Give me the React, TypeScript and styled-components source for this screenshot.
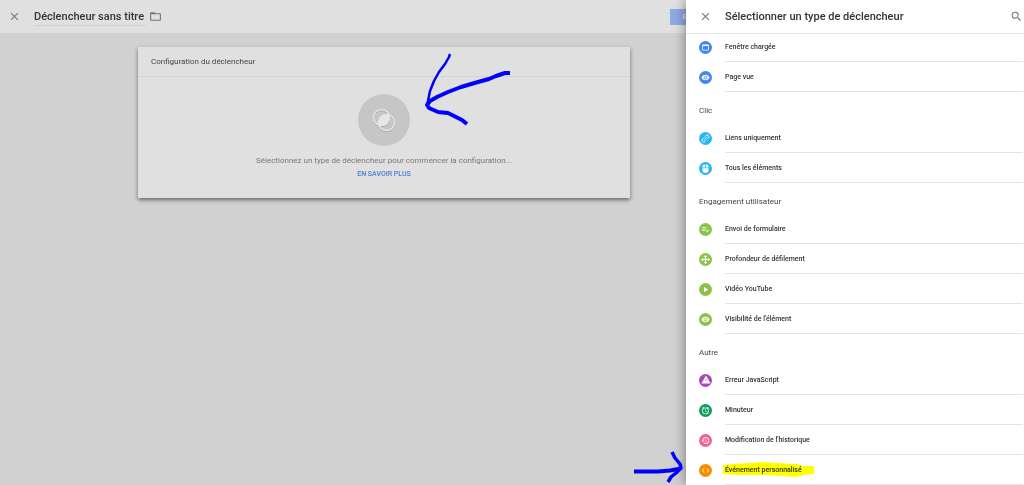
import React from 'react';
import styled, { createGlobalStyle } from 'styled-components';
import type { IconType } from 'react-icons';
import {
  MdAlarm,
  MdClose,
  MdCode,
  MdFolderOpen,
  MdHistory,
  MdPlayArrow,
  MdPlaylistAddCheck,
  MdSearch,
  MdVisibility,
  MdWebAsset,
} from 'react-icons/md';

const GlobalStyle = createGlobalStyle`
  * { box-sizing: border-box; }
  body {
    margin: 0;
    background: #d1d1d1;
    font-family: Roboto, "Liberation Sans", sans-serif;
    color: #3c3c3c;
  }
  button { font: inherit; color: inherit; border: 0; padding: 0; background: none; cursor: pointer; }
  h1, h2, h3, p, ul { margin: 0; padding: 0; font-weight: 400; }
`;

const Page = styled.div`
  display: flex;
  height: 100vh;
  overflow: hidden;
`;

const Workspace = styled.div`
  flex: 1;
  min-width: 0;
  overflow: hidden;
`;

const TopBar = styled.header`
  display: flex;
  align-items: center;
  height: 33px;
  padding-left: 8px;
  background: #e0e0e0;
`;

const IconButton = styled.button`
  display: grid;
  place-items: center;
  flex: none;
  width: 13px;
  height: 13px;
  color: #757575;
`;

const TitleField = styled.input`
  width: 112px;
  height: 18px;
  margin: 0 3px 0 13px;
  padding: 0;
  border: 0;
  border-bottom: 1px solid #d2d2d2;
  background: none;
  font: 500 11px/16px Roboto, "Liberation Sans", sans-serif;
  color: #333;
`;

const SaveButton = styled.button`
  flex: none;
  width: 64px;
  height: 16px;
  margin: 0 -48px 0 auto;
  background: #8eabe2;
  color: #dfe5f0;
  font-size: 8px;
  font-weight: 500;
  line-height: 16px;
`;

const Main = styled.main`
  padding: 14px 56px 0 138px;
`;

const Card = styled.section`
  position: relative;
  background: #e0e0e0;
  box-shadow: 0 2px 4px rgba(0, 0, 0, 0.5);
`;

const CardTitle = styled.h2`
  padding: 0 13px;
  border-bottom: 1px solid #d3d3d3;
  font-size: 8px;
  line-height: 29px;
  color: #444;
`;

const CardBody = styled.div`
  display: flex;
  flex-direction: column;
  align-items: center;
  padding: 17px 0 18px;
`;

const Emblem = styled.button`
  display: grid;
  place-items: center;
  width: 52px;
  height: 52px;
  border-radius: 50%;
  background: #c6c6c6;
`;

const Hint = styled.p`
  margin-top: 8px;
  font-size: 8px;
  line-height: 14px;
  color: #777;
`;

const LearnMore = styled.a`
  font-size: 7px;
  font-weight: 500;
  line-height: 12px;
  color: #4a78d8;
  text-decoration: none;
`;

const CardArrow = styled.svg`
  position: absolute;
  top: 0;
  left: 50%;
  width: 140px;
  height: 90px;
  pointer-events: none;
`;

const Panel = styled.aside`
  position: relative;
  display: flex;
  flex-direction: column;
  flex: none;
  width: 338px;
  background: #fff;
  box-shadow: 0 0 12px rgba(0, 0, 0, 0.45);
`;

const PanelHeader = styled.header`
  position: relative;
  z-index: 1;
  display: flex;
  align-items: center;
  flex: none;
  height: 34px;
  padding: 0 1px 0 13px;
  border-bottom: 1px solid #e4e4e4;
  background: #fff;
`;

const PanelTitle = styled.h1`
  flex: 1;
  margin-left: 13px;
  font-size: 11px;
  font-weight: 500;
  line-height: 16px;
  color: #333;
`;

const PanelBody = styled.div`
  margin-top: -2px;
`;

const GroupTitle = styled.h3`
  height: 31px;
  padding: 5px 0 0 13px;
  font-size: 8px;
  line-height: 28px;
  color: #444;
`;

const Row = styled.button`
  display: flex;
  align-items: center;
  gap: 13px;
  width: 100%;
  height: 30px;
  padding: 0 1px 0 13px;
  text-align: left;
`;

const Badge = styled.span<{ $color: string }>`
  display: grid;
  place-items: center;
  flex: none;
  width: 13px;
  height: 13px;
  border-radius: 50%;
  background: ${(p) => p.$color};
  color: #fff;
`;

const RowLabel = styled.span`
  flex: 1;
  height: 30px;
  border-bottom: 1px solid #e4e4e4;
  font-size: 7px;
  font-weight: 500;
  line-height: 31px;
  color: #333;
`;

const Marked = styled.span`
  position: relative;
  display: inline-block;
`;

const MarkerStroke = styled.svg`
  position: absolute;
  top: 7px;
  left: -2px;
  width: 92px;
  height: 16px;
  mix-blend-mode: multiply;
`;

const PanelArrow = styled.svg`
  position: absolute;
  top: 450px;
  left: -54px;
  width: 52px;
  height: 35px;
  pointer-events: none;
`;

const MouseGlyph = () => (
  <svg width="9" height="9" viewBox="0 0 24 24" fill="currentColor">
    <path d="M11 1H9a5 5 0 0 0-5 5v3h7zM13 1v8h7V6a5 5 0 0 0-5-5zM4 11v7a5 5 0 0 0 5 5h6a5 5 0 0 0 5-5v-7z" />
  </svg>
);

const ScrollGlyph = () => (
  <svg width="9" height="9" viewBox="0 0 24 24" fill="currentColor">
    <path d="M12 0l5 5h-3.500v5.500H19V7l5 5-5 5v-3.500h-5.500V19H17l-5 5-5-5h3.500v-5.500H5V17l-5-5 5-5v3.500h5.500V5H7z" />
  </svg>
);

const LinkGlyph = () => (
  <svg width="9" height="9" viewBox="0 0 24 24" fill="none" stroke="currentColor" strokeWidth="2.200">
    <g transform="rotate(-45 12 12)">
      <path d="M10 7.500H5.500a4.500 4.500 0 0 0 0 9H10M14 7.500h4.500a4.500 4.500 0 0 1 0 9H14M7 12h10" />
    </g>
  </svg>
);

const ErrorGlyph = () => (
  <svg width="10" height="10" viewBox="0 0 24 24" fill="currentColor" fillRule="evenodd">
    <path d="M12 1L1 20.500h22zM11.200 9h1.600v6h-1.600z" />
  </svg>
);

const glyph = (Icon: IconType, size = 9) => <Icon size={size} />;

type Item = { label: string; color: string; icon: React.ReactNode; marked?: boolean };
type Group = { title?: string; items: Item[] };

const groups: Group[] = [
  {
    items: [
      { label: 'Fenêtre chargée', color: '#4285f4', icon: glyph(MdWebAsset) },
      { label: 'Page vue', color: '#4285f4', icon: glyph(MdVisibility) },
    ],
  },
  {
    title: 'Clic',
    items: [
      { label: 'Liens uniquement', color: '#29b6f6', icon: <LinkGlyph /> },
      { label: 'Tous les éléments', color: '#29b6f6', icon: <MouseGlyph /> },
    ],
  },
  {
    title: 'Engagement utilisateur',
    items: [
      { label: 'Envoi de formulaire', color: '#8bc34a', icon: glyph(MdPlaylistAddCheck) },
      { label: 'Profondeur de défilement', color: '#8bc34a', icon: <ScrollGlyph /> },
      { label: 'Vidéo YouTube', color: '#8bc34a', icon: glyph(MdPlayArrow) },
      { label: "Visibilité de l'élément", color: '#8bc34a', icon: glyph(MdVisibility) },
    ],
  },
  {
    title: 'Autre',
    items: [
      { label: 'Erreur JavaScript', color: '#ab47bc', icon: <ErrorGlyph /> },
      { label: 'Minuteur', color: '#0f9d58', icon: glyph(MdAlarm) },
      { label: "Modification de l'historique", color: '#f06292', icon: glyph(MdHistory) },
      { label: 'Événement personnalisé', color: '#fb8c00', icon: glyph(MdCode), marked: true },
    ],
  },
];

export default function App() {
  return (
    <>
      <GlobalStyle />
      <Page>
        <Workspace>
          <TopBar>
            <IconButton aria-label="Fermer">
              <MdClose size={13} />
            </IconButton>
            <TitleField aria-label="Nom du déclencheur" defaultValue="Déclencheur sans titre" />
            <IconButton aria-label="Dossier">
              <MdFolderOpen size={13} />
            </IconButton>
            <SaveButton>Enregistrer</SaveButton>
          </TopBar>
          <Main>
            <Card>
              <CardTitle>Configuration du déclencheur</CardTitle>
              <CardBody>
                <Emblem aria-label="Choisir un type de déclencheur">
                  <svg width="26" height="26" viewBox="0 0 26 26" fill="none">
                    <g stroke="#aaa" strokeWidth="1.500" transform="translate(0 1)">
                      <circle cx="10.500" cy="10.500" r="8" />
                      <circle cx="15.500" cy="15.500" r="8" />
                    </g>
                    <path d="M18 8a8 8 0 0 1-10 10A8 8 0 0 1 18 8z" fill="#e6e6e6" />
                    <g stroke="#e6e6e6" strokeWidth="1.500">
                      <circle cx="10.500" cy="10.500" r="8" />
                      <circle cx="15.500" cy="15.500" r="8" />
                    </g>
                  </svg>
                </Emblem>
                <Hint>Sélectionnez un type de déclencheur pour commencer la configuration...</Hint>
                <LearnMore href="#">EN SAVOIR PLUS</LearnMore>
              </CardBody>
              <CardArrow
                viewBox="384 47 140 90"
                fill="none"
                stroke="#0000fe"
                strokeWidth="4"
                strokeLinejoin="round"
              >
                <path strokeWidth="2.500" d="M450 54l-1 3-4 7-6 8-5 9-4 10-2 10-1 4" />
                <path d="M510 73h-5l-9 3-7 3-11 3-17 5-13 5-11 5-7 4-3 4 2 3 9 4 10 1 6 3 8 4 5 4" />
              </CardArrow>
            </Card>
          </Main>
        </Workspace>
        <Panel>
          <PanelHeader>
            <IconButton aria-label="Fermer">
              <MdClose size={13} />
            </IconButton>
            <PanelTitle>Sélectionner un type de déclencheur</PanelTitle>
            <IconButton aria-label="Rechercher">
              <MdSearch size={13} />
            </IconButton>
          </PanelHeader>
          <PanelBody>
            {groups.map((group, i) => (
              <section key={i}>
                {group.title && <GroupTitle>{group.title}</GroupTitle>}
                {group.items.map((item) => (
                  <Row key={item.label}>
                    <Badge $color={item.color}>{item.icon}</Badge>
                    <RowLabel>
                      {item.marked ? (
                        <Marked>
                          {item.label}
                          <MarkerStroke viewBox="723 460 92 16">
                            <path
                              fill="#ff0"
                              d="M723 463l10-1 16-1 12-1 17 1 17 1 8 2h11v8l-9 1-9 2-14-1-16-1-28 0-15-1z"
                            />
                          </MarkerStroke>
                        </Marked>
                      ) : (
                        item.label
                      )}
                    </RowLabel>
                  </Row>
                ))}
              </section>
            ))}
          </PanelBody>
          <PanelArrow viewBox="632 450 52 35" fill="none" stroke="#0000fe" strokeWidth="4">
            <path d="M634 471.500h24l12-1 11-2" />
            <path strokeWidth="3.500" strokeLinejoin="round" d="M672 452l3 6 5 6 1 4-5 5-5 4-3 5" />
          </PanelArrow>
        </Panel>
      </Page>
    </>
  );
}
